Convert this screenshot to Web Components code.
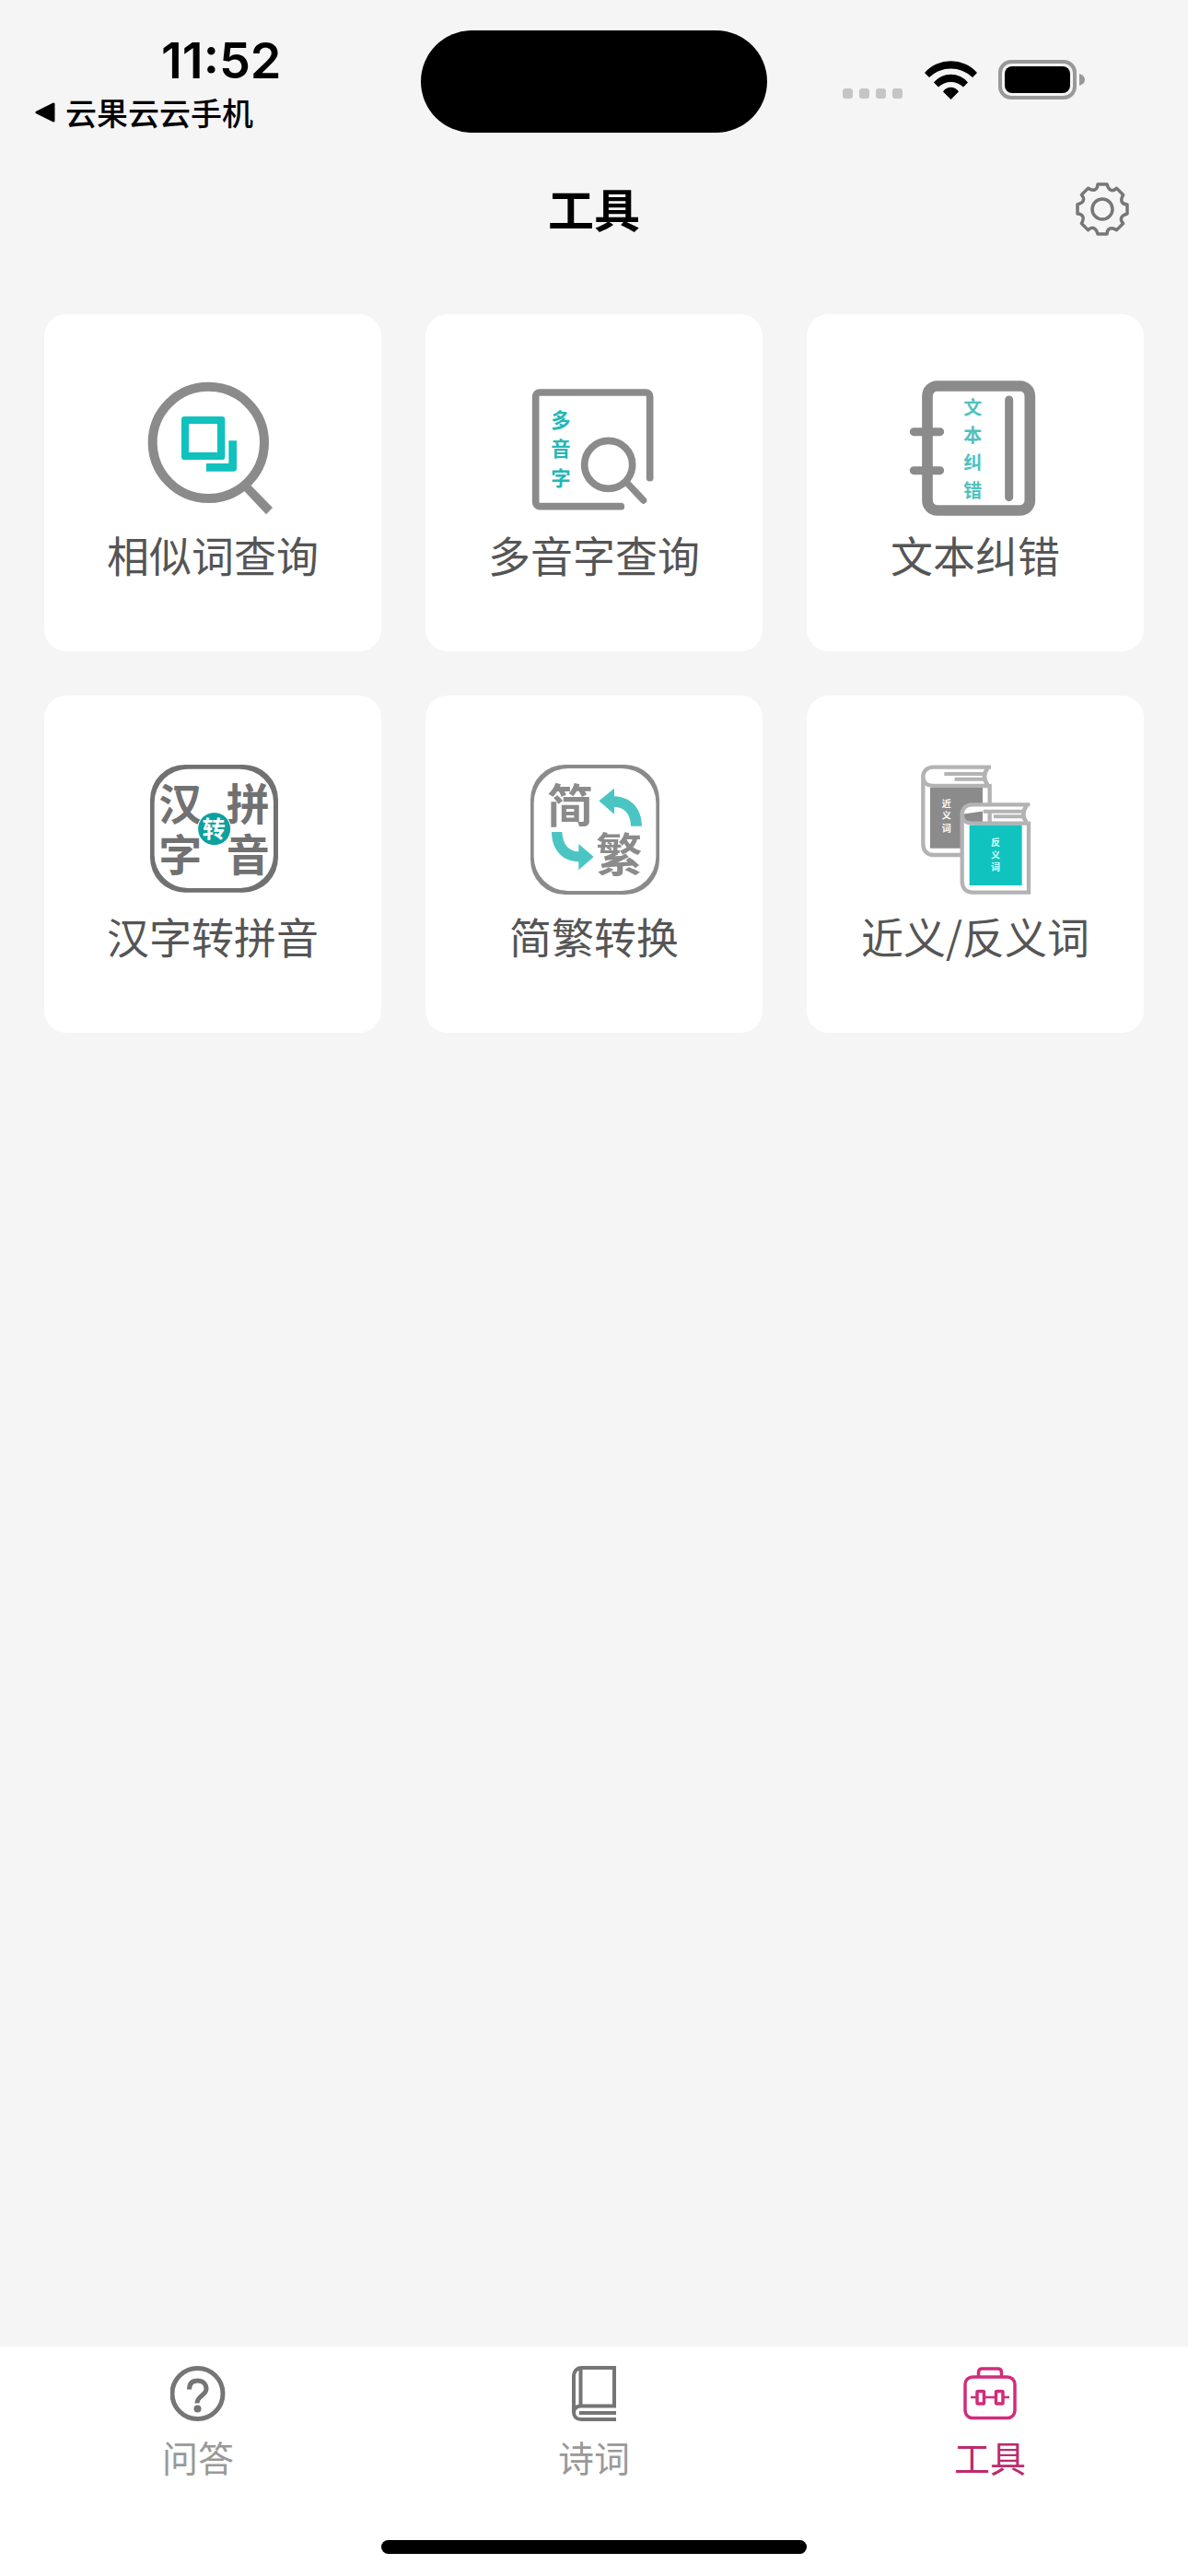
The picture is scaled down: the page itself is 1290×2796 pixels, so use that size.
<!DOCTYPE html>
<html lang="zh-CN">
<head>
<meta charset="utf-8">
<meta name="viewport" content="width=device-width, initial-scale=1">
<title>工具</title>
<style>
  body {
    margin: 0;
    background: #f5f5f5;
    color: #000;
    font-family: Inter, "Noto Sans CJK SC", sans-serif;
  }
  tool-card text { font-family: "Noto Sans CJK SC", sans-serif; font-weight: 700; text-anchor: middle; }
</style>
</head>
<body>

<template id="app-shell-t">
  <style>
    :host { display: flex; flex-direction: column; min-height: 100vh; }
    main { flex: 1; padding: 48px; }
  </style>
  <slot name="top"></slot>
  <main><slot></slot></main>
  <slot name="bottom"></slot>
</template>

<template id="status-bar-t">
  <style>
    :host { display: grid; grid-template-columns: 1fr 376px 1fr; align-items: center; padding: 33px 0 16px; }
    .left { display: flex; flex-direction: column; gap: 6px; }
    time { padding-left: 175px; font-size: 54px; line-height: 60px; font-weight: 600; }
    a { display: flex; align-items: center; gap: 11px; padding-left: 38px; color: inherit; text-decoration: none;
        font: 500 34px/40px "Noto Sans CJK SC", sans-serif; }
    .island { height: 111px; border-radius: 56px; background: #000; }
    .right { display: flex; justify-content: flex-end; align-items: center; gap: 23px; padding: 0 112px 4px 0; }
    svg { display: block; }
  </style>
  <div class="left">
    <time>11:52</time>
    <a href="#back">
      <svg width="22" height="22" viewBox="0 0 22 22" aria-hidden="true"><path d="M2 11 20 2V20Z" stroke="#000" stroke-width="3" stroke-linejoin="round"/></svg>
      <slot></slot>
    </a>
  </div>
  <div class="island"></div>
  <div class="right">
    <svg width="66" height="43" viewBox="0 0 66 43" fill="#c5c5c5" aria-hidden="true">
      <rect x="0" y="31" width="11" height="11" rx="3"/><rect x="18" y="31" width="11" height="11" rx="3"/>
      <rect x="36" y="31" width="11" height="11" rx="3"/><rect x="54" y="31" width="11" height="11" rx="3"/>
    </svg>
    <svg width="57" height="42" viewBox="0 0 57 42" aria-hidden="true">
      <path d="M0 13A38 38 0 0 1 57 13L52 18A34 34 0 0 0 5 18Z"/>
      <path d="M10 23.500A24 24 0 0 1 47 23.500L42 28.500A19.300 19.300 0 0 0 15 28.500Z"/>
      <path d="M20 33.500A10 10 0 0 1 37 33.500L28.500 42Z"/>
    </svg>
    <svg width="94" height="43" viewBox="0 0 94 43" aria-hidden="true">
      <rect x="2" y="2" width="81" height="39" rx="12" fill="none" stroke="#999" stroke-width="4"/>
      <rect x="7" y="7" width="71" height="29" rx="8"/>
      <path d="M88 15Q94 17 94 21.500T88 28Z" fill="#999"/>
    </svg>
  </div>
</template>

<template id="nav-header-t">
  <style>
    :host { display: grid; grid-template-columns: 1fr auto 1fr; align-items: center; height: 133px; padding: 0 63px; }
    h1 { grid-column: 2; margin: 0; padding-bottom: 4px; font: 700 50px/72px "Noto Sans CJK SC", sans-serif; }
    button { justify-self: end; padding: 0; border: 0; background: none; }
    svg { display: block; }
  </style>
  <h1><slot></slot></h1>
  <button type="button" aria-label="设置">
    <svg width="60" height="60" viewBox="-30 -30 60 60" fill="none" stroke="#777" stroke-width="3.500" stroke-linejoin="round">
      <path class="gear"/><circle r="11"/>
    </svg>
  </button>
</template>

<template id="tool-grid-t">
  <style>
    :host { display: grid; grid-template-columns: repeat(3, 1fr); gap: 48px; }
  </style>
  <slot></slot>
</template>

<template id="tool-card-t">
  <style>
    :host { display: block; }
    a { display: flex; flex-direction: column; align-items: center; gap: 7px; box-sizing: border-box;
        aspect-ratio: 1; padding-top: 70px; border-radius: 24px; background: #fff; color: #555; text-decoration: none;
        font: 400 46px/66px "Noto Sans CJK SC", sans-serif; }
    ::slotted(svg) { display: block; width: 150px; height: 150px; }
  </style>
  <a href="#tool"><slot name="icon"></slot><span><slot></slot></span></a>
</template>

<template id="tab-bar-t">
  <style>
    :host { display: block; background: #fff; padding: 21px 0 24px; }
    nav { display: flex; }
    .home { width: 462px; height: 15px; margin: 65px auto 0; border-radius: 8px; background: #000; }
  </style>
  <nav><slot></slot></nav>
  <div class="home"></div>
</template>

<template id="tab-item-t">
  <style>
    :host { display: block; flex: 1; }
    a { display: flex; flex-direction: column; align-items: center; gap: 12px; color: #999; text-decoration: none;
        font: 400 39px/52px "Noto Sans CJK SC", sans-serif; }
    ::slotted(svg) { display: block; width: 60px; height: 60px; }
    :host([active]) a { color: #bd2b6e; }
  </style>
  <a href="#tab"><slot name="icon"></slot><span><slot></slot></span></a>
</template>

<app-shell>
  <status-bar slot="top">云果云云手机</status-bar>
  <nav-header slot="top">工具</nav-header>

  <tool-grid>
    <tool-card>
      <svg slot="icon" viewBox="348 243 450 450" aria-hidden="true">
        <circle cx="559" cy="451" r="182" fill="none" stroke="#8b8b8b" stroke-width="30"/>
        <path d="M675 608 697 590 768 663 747 685Z" fill="#8b8b8b"/>
        <path fill="#10c1be" fill-rule="evenodd" d="M481 366H603Q613 366 613 376V497Q613 507 603 507H481Q471 507 471 497V376Q471 366 481 366ZM495 390V483H588V390Z"/>
        <path d="M625 445H651V535Q651 545 641 545H552V519H625Z" fill="#10c1be"/>
      </svg>
      相似词查询
    </tool-card>

    <tool-card>
      <svg slot="icon" viewBox="345 243 450 450" aria-hidden="true">
        <g fill="none" stroke="#8b8b8b" stroke-width="23" stroke-linecap="round">
          <path d="M658 659H393A13 13 0 0 1 380 646V301A13 13 0 0 1 393 288H739A13 13 0 0 1 752 301V566"/>
          <circle cx="617" cy="523" r="78"/>
          <path d="M678 583 731 639" stroke-width="22"/>
        </g>
        <g fill="#23b7b6" font-size="64">
          <text x="462" y="402">多</text><text x="462" y="496">音</text><text x="462" y="590">字</text>
        </g>
      </svg>
      多音字查询
    </tool-card>

    <tool-card>
      <svg slot="icon" viewBox="342 243 450 450" aria-hidden="true">
        <g fill="none" stroke="#8b8b8b" stroke-width="27" stroke-linecap="round">
          <rect x="411" y="267" width="334" height="405" rx="32" stroke-width="35"/>
          <path d="M367 416H452M367 542H452M677 312V629"/>
        </g>
        <g fill="#50c1bf" font-size="60">
          <text x="559" y="361">文</text><text x="559" y="450">本</text><text x="559" y="540">纠</text><text x="559" y="629">错</text>
        </g>
      </svg>
      文本纠错
    </tool-card>

    <tool-card>
      <svg slot="icon" viewBox="348 240 450 450" aria-hidden="true">
        <path fill="#717171" fill-rule="evenodd" d="M482 255H673A113 113 0 0 1 786 368V558A113 113 0 0 1 673 671H482A113 113 0 0 1 369 558V368A113 113 0 0 1 482 255ZM492 269A109 109 0 0 0 383 378V548A109 109 0 0 0 492 657H662A109 109 0 0 0 771 548V378A109 109 0 0 0 662 269Z"/>
        <g fill="#717171" font-size="141">
          <text x="467" y="434">汉</text><text x="688" y="434">拼</text><text x="467" y="600">字</text><text x="688" y="600">音</text>
        </g>
        <circle cx="578" cy="464" r="54" fill="#0ba19e" stroke="#fff" stroke-width="3"/>
        <text x="577" y="492" font-size="75" fill="#fff">转</text>
      </svg>
      汉字转拼音
    </tool-card>

    <tool-card>
      <svg slot="icon" viewBox="345 240 450 450" aria-hidden="true">
        <path fill="#8b8b8b" fill-rule="evenodd" d="M476 255H670A113 113 0 0 1 783 368V565A113 113 0 0 1 670 678H476A113 113 0 0 1 363 565V368A113 113 0 0 1 476 255ZM486 267A112 112 0 0 0 374 379V554A112 112 0 0 0 486 666H660A112 112 0 0 0 772 554V379A112 112 0 0 0 660 267Z"/>
        <g fill="#8b8b8b" font-size="150">
          <text x="492" y="444">简</text><text x="652" y="604">繁</text>
        </g>
        <g fill="#4bc5c4">
          <path d="M586 373 636 332V358C692 360 726 400 726 455H690C690 415 668 393 636 392V416Z"/>
          <path d="M569 555 520 598V571C466 570 432 530 432 474H466C468 515 488 537 520 538V513Z"/>
        </g>
      </svg>
      简繁转换
    </tool-card>

    <tool-card>
      <svg slot="icon" viewBox="342 240 450 450" aria-hidden="true">
        <defs>
          <g id="book" fill="none" stroke="#b3b3b3" stroke-width="13">
            <path d="M618 263H430C410 263 397 276 397 294C397 312 410 324 430 324H614V549H432C410 549 397 535 397 512V294" fill="#fff"/>
            <path d="M618 270H608V317H618Z" fill="#fff" stroke="none"/>
            <path d="M607 266Q587 294 607 321" stroke-width="14"/>
            <path d="M466 285H598M500 302H598" stroke-width="12"/>
          </g>
        </defs>
        <use href="#book"/>
        <path d="M420 330H591V527H420Z" fill="#8b8b8b"/>
        <g fill="#fff" font-size="30"><text x="473" y="392">近</text><text x="473" y="432">义</text><text x="473" y="473">词</text></g>
        <use href="#book" x="127" y="122"/>
        <path d="M548 452H719V648H548Z" fill="#10c3bf"/>
        <g fill="#d8ffff" font-size="30"><text x="633" y="520">反</text><text x="633" y="560">义</text><text x="633" y="601">词</text></g>
      </svg>
      近义/反义词
    </tool-card>
  </tool-grid>

  <tab-bar slot="bottom">
    <tab-item>
      <svg slot="icon" viewBox="0 0 60 60" fill="none" stroke="#757575" stroke-width="5" aria-hidden="true">
        <circle cx="29.500" cy="30" r="27.500"/>
        <path d="M20.500 25.500C20.500 19 24 16 29.500 16C35.500 16 39 19.500 39 25C39 32 29 32 29 40.500"/>
        <circle cx="29.500" cy="46.500" r="4" fill="#757575" stroke="none"/>
      </svg>
      问答
    </tab-item>
    <tab-item>
      <svg slot="icon" viewBox="0 0 60 60" fill="none" stroke="#757575" stroke-width="4" aria-hidden="true">
        <path d="M54 58H16C11 58 8 55 8 50V12C8 6 11 2 17 2H52V43.500H16C11 43.500 8 46 8 51M15.500 2V43M14 51H54"/>
      </svg>
      诗词
    </tab-item>
    <tab-item active>
      <svg slot="icon" viewBox="0 0 60 60" fill="none" stroke="#d02c7c" stroke-width="3.500" aria-hidden="true">
        <rect x="3" y="12" width="54" height="44.500" rx="8"/>
        <path d="M17.500 12V7Q17.500 3 21.500 3H38.500Q42.500 3 42.500 7V12"/>
        <rect x="16" y="27.500" width="7.500" height="13.500" rx="1"/><rect x="36.500" y="27.500" width="7.500" height="13.500" rx="1"/>
        <path d="M9 34H15M25 34H35M45 34H51" stroke-width="2.500"/>
      </svg>
      工具
    </tab-item>
  </tab-bar>
</app-shell>

<script>
  class TemplateElement extends HTMLElement {
    constructor() {
      super();
      const template = document.getElementById(this.localName + '-t');
      this.attachShadow({ mode: 'open' }).append(template.content.cloneNode(true));
    }
  }

  class NavHeader extends TemplateElement {
    constructor() {
      super();
      this.shadowRoot.querySelector('.gear').setAttribute('d', NavHeader.gearPath());
    }
    // One tooth and the valley after it, turned eight times round the centre.
    static gearPath() {
      const turn = ([x, y], a) => [x * Math.cos(a) - y * Math.sin(a), x * Math.sin(a) + y * Math.cos(a)]
        .map(n => n.toFixed(2)).join(' ');
      let d = '';
      for (let k = 0; k < 8; k++) {
        const a = k * Math.PI / 4;
        d += (k ? 'L' : 'M') + turn([-5, -27], a) + 'L' + turn([5, -27], a)
          + 'C' + [[7, -20], [11, -18.5], [15.56, -22.63]].map(p => turn(p, a)).join(' ');
      }
      return d + 'Z';
    }
  }

  customElements.define('app-shell', class extends TemplateElement {});
  customElements.define('status-bar', class extends TemplateElement {});
  customElements.define('nav-header', NavHeader);
  customElements.define('tool-grid', class extends TemplateElement {});
  customElements.define('tool-card', class extends TemplateElement {});
  customElements.define('tab-bar', class extends TemplateElement {});
  customElements.define('tab-item', class extends TemplateElement {});
</script>
</body>
</html>
